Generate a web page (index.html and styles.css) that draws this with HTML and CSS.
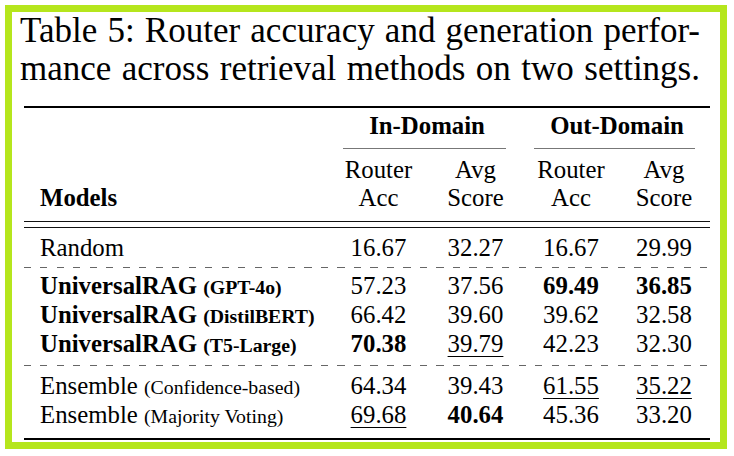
FILE: index.html
```html
<!DOCTYPE html>
<html>
<head>
<meta charset="utf-8">
<link rel="stylesheet" href="styles.css">
</head>
<body>
<div class="frame">
  <div class="caption">
    <div class="cap-line">Table 5: Router accuracy and generation perfor-</div>
    <div class="cap-line">mance across retrieval methods on two settings.</div>
  </div>
  <div class="tbl">
    <div class="rule thick"></div>

    <div class="c"></div>
    <div class="grp">In-Domain</div>
    <div class="grp">Out-Domain</div>

    <div class="c"></div>
    <div class="cmid cmid-in"></div>
    <div class="cmid cmid-out"></div>

    <div class="hmodel">Models</div>
    <div class="hcol">Router<br>Acc</div>
    <div class="hcol">Avg<br>Score</div>
    <div class="hcol">Router<br>Acc</div>
    <div class="hcol">Avg<br>Score</div>

    <div class="rule double"></div>

    <div class="m">Random</div>
    <div class="n">16.67</div>
    <div class="n">32.27</div>
    <div class="n">16.67</div>
    <div class="n">29.99</div>

    <div class="rule dash dash-a"></div>

    <div class="m"><b>UniversalRAG</b> <b class="small">(GPT-4o)</b></div>
    <div class="n">57.23</div>
    <div class="n">37.56</div>
    <div class="n"><b>69.49</b></div>
    <div class="n"><b>36.85</b></div>

    <div class="m"><b>UniversalRAG</b> <b class="small">(DistilBERT)</b></div>
    <div class="n">66.42</div>
    <div class="n">39.60</div>
    <div class="n">39.62</div>
    <div class="n">32.58</div>

    <div class="m"><b>UniversalRAG</b> <b class="small">(T5-Large)</b></div>
    <div class="n"><b>70.38</b></div>
    <div class="n"><span class="u">39.79</span></div>
    <div class="n">42.23</div>
    <div class="n">32.30</div>

    <div class="rule dash dash-b"></div>

    <div class="m">Ensemble <span class="small">(Confidence-based)</span></div>
    <div class="n">64.34</div>
    <div class="n">39.43</div>
    <div class="n"><span class="u">61.55</span></div>
    <div class="n"><span class="u">35.22</span></div>

    <div class="m">Ensemble <span class="small">(Majority Voting)</span></div>
    <div class="n"><span class="u">69.68</span></div>
    <div class="n"><b>40.64</b></div>
    <div class="n">45.36</div>
    <div class="n">33.20</div>

    <div class="rule thick bottom"></div>
  </div>
</div>
</body>
</html>
```

FILE: styles.css
```css
html, body {
  margin: 0;
  padding: 0;
  background: #ffffff;
}

body {
  font-family: "Liberation Serif", "Times New Roman", Times, "DejaVu Serif", serif;
  color: #000;
}

.frame {
  margin: 5px 7px 7px 5px;
  width: 708px;
  height: 430px;
  border: 7px solid #b5e61d;
  background: #fff;
  overflow: hidden;
}

.caption {
  padding: 0 20px 0 8px;
  font-size: 35px;
  line-height: 38px;
}

.cap-line {
  text-align: justify;
  text-align-last: justify;
  white-space: nowrap;
}

.tbl {
  margin: 18px 0 0 12px;
  width: 686px;
  display: grid;
  grid-template-columns: 306px 97px 97px 94px 92px;
  font-size: 24.8px;
  line-height: 28px;
}

.rule {
  grid-column: 1 / -1;
}

.thick {
  height: 2px;
  background: #000;
  margin-bottom: 4px;
}

.thick.bottom {
  margin: 8px 0 0 0;
}

.grp {
  grid-column: span 2;
  text-align: center;
  font-weight: bold;
}

.cmid {
  grid-column: span 2;
  height: 1px;
  background: #777;
  margin-top: 8px;
  margin-bottom: 7px;
}

.cmid-in {
  margin-left: 13px;
  margin-right: 18px;
}

.cmid-out {
  margin-left: 10px;
  margin-right: 15px;
}

.hmodel {
  align-self: end;
  padding-left: 16px;
  font-weight: bold;
}

.hcol {
  text-align: center;
}

.double {
  margin-top: 9px;
  margin-bottom: 6px;
  height: 5px;
  border-top: 1px solid #111;
  border-bottom: 1px solid #111;
}

.dash {
  height: 1px;
  background: repeating-linear-gradient(to right, #666 0, #666 7px, transparent 7px, transparent 16.5px);
}

.dash-a {
  margin-top: 5px;
  margin-bottom: 4px;
}

.dash-b {
  margin-top: 6px;
  margin-bottom: 6px;
}

.m {
  padding-left: 16px;
  white-space: nowrap;
}

.n {
  text-align: center;
}

.small {
  font-size: 19.8px;
}

.u {
  text-decoration: underline;
  text-decoration-thickness: 1px;
  text-underline-offset: 4px;
}
```
